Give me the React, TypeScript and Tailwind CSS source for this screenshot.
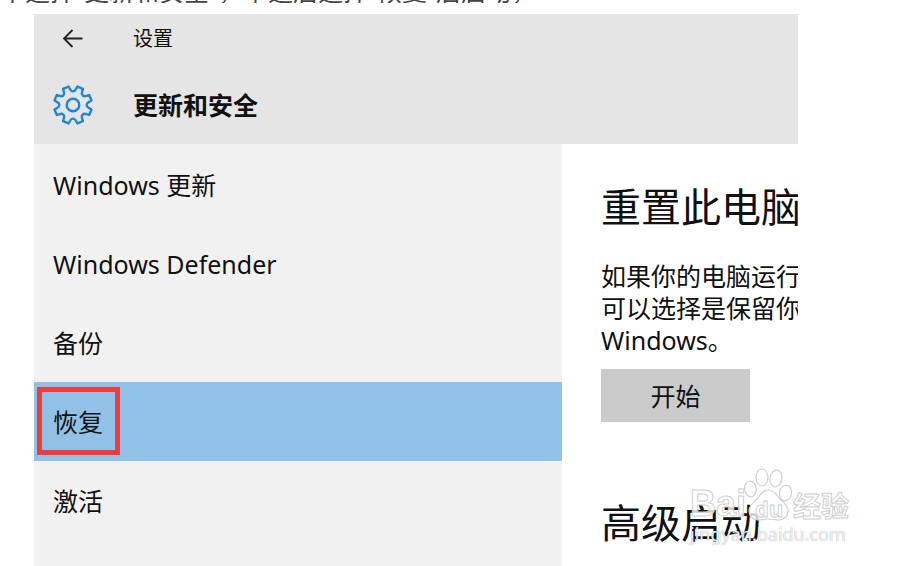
import { useState } from "react";

const navItems = ["Windows 更新", "Windows Defender", "备份", "恢复", "激活"];

function polar(radius: number, degrees: number) {
  const a = (degrees * Math.PI) / 180;
  return `${(radius * Math.cos(a)).toFixed(2)} ${(radius * Math.sin(a)).toFixed(2)}`;
}

// Eight teeth with a deep rounded notch between each pair
function gearPath() {
  let d = "";
  for (let i = 0; i < 8; i++) {
    const a = 22.5 + i * 45;
    d += `${i === 0 ? "M" : "L"}${polar(19, a - 9)} L${polar(19, a + 9)} `;
    d += `L${polar(16, a + 12)} C${polar(13, a + 16)} ${polar(13, a + 29)} ${polar(16, a + 33)} `;
  }
  return d + "Z";
}

function GearIcon() {
  return (
    <svg viewBox="-20 -20 40 40" className="h-10 w-10" fill="none" stroke="#2384d3" strokeWidth="2.4" strokeLinejoin="round" aria-hidden="true">
      <path d={gearPath()} />
      <circle r="6.3" />
    </svg>
  );
}

function BackIcon() {
  return (
    <svg viewBox="0 0 20 20" className="h-5 w-5" fill="none" stroke="#222" strokeWidth="1.8" aria-hidden="true">
      <path d="M19.5 9.500H1M9.500 1L1 9.500l8.500 8.500" />
    </svg>
  );
}

function Paw() {
  return (
    <svg viewBox="0 0 50 54" className="h-[54px] w-[50px]" fill="#fff" fillOpacity="0.8" stroke="#cfcfcf" strokeWidth="1.2" aria-hidden="true">
      <ellipse cx="7.500" cy="21" rx="5.800" ry="7.800" transform="rotate(-8 7.500 21)" />
      <ellipse cx="19" cy="9.500" rx="6" ry="8.500" />
      <ellipse cx="33" cy="10.500" rx="6" ry="8.500" transform="rotate(10 33 10.500)" />
      <ellipse cx="42.500" cy="25" rx="6" ry="7.800" transform="rotate(10 42.500 25)" />
      <path d="M25 22c-5 0-7 4-10 8-4 4-9 7-9 13 0 5 4 9 9 9 4 0 6-1 10-1s7 1 11 1c5 0 9-4 9-9 0-6-5-9-9-13-3-4-6-8-11-8Z" />
    </svg>
  );
}

function Watermark() {
  return (
    <div className="pointer-events-none absolute top-[468px] left-[690px] w-[162px] font-['Noto_Sans','Noto_Sans_CJK_SC',sans-serif] text-white/80">
      <div className="flex h-[54px] items-end font-bold [-webkit-text-stroke:1px_#cfcfcf]">
        <span className="w-[53px] font-['Liberation_Sans',sans-serif] text-[36px] leading-[36px]">Bai</span>
        <span className="relative">
          <Paw />
          <span className="absolute bottom-0 left-[12px] text-[22px] leading-[28px]">du</span>
        </span>
        <span className="text-[28px] leading-[32px]">经验</span>
      </div>
      <div className="text-[18px] leading-[24px] [text-shadow:0_0_1px_#999]">jingyan.baidu.com</div>
    </div>
  );
}

export default function App() {
  const [active, setActive] = useState("恢复");

  return (
    <div className="relative flex h-screen flex-col overflow-hidden bg-white font-['Noto_Sans','Noto_Sans_CJK_SC',sans-serif] text-[25px] text-[#111]">
      {/* Tail of the paragraph above the window */}
      <p className="flex h-[14px] shrink-0 flex-col">
        <span className="flex h-[3px] items-end overflow-hidden leading-[24px] whitespace-nowrap text-[#444]">
          单选择“更新和安全”，单选后选择“恢复”后启动，
        </span>
      </p>

      <div className="mr-[101px] ml-[34px] flex min-h-0 flex-1 flex-col overflow-hidden">
        <header className="h-[130px] shrink-0 bg-[#e5e5e5] pl-[19px]">
          <div className="flex h-[50px] items-center">
            <button type="button" aria-label="返回" className="flex w-20 pl-[10px]">
              <BackIcon />
            </button>
            <span className="text-[20px] leading-[30px]">设置</span>
          </div>
          <div className="flex h-[82px] items-center">
            <span className="w-20">
              <GearIcon />
            </span>
            <h1 className="leading-[32px] font-bold">更新和安全</h1>
          </div>
        </header>

        <div className="flex min-h-0 flex-1">
          <nav className="w-[528px] shrink-0 bg-[#f1f1f1] pt-px">
            {navItems.map((item) => (
              <button
                key={item}
                type="button"
                onClick={() => setActive(item)}
                className={`relative block h-[79px] w-full pl-[19px] text-left leading-[32px] ${
                  item === active ? "bg-[#91c1e7]" : ""
                }`}
              >
                {item}
                {item === "恢复" && (
                  <span className="absolute top-[5px] left-[3px] h-[68px] w-[83px] border-[5px] border-[#f03a3c]" />
                )}
              </button>
            ))}
          </nav>

          <main className="min-w-0 flex-1 overflow-hidden pt-9 pl-[39px] whitespace-nowrap">
            <h2 className="text-[40px] leading-[54px]">重置此电脑</h2>
            <p className="mt-[26px] leading-[32px]">
              如果你的电脑运行
              <br />
              可以选择是保留你
              <br />
              Windows。
            </p>
            <button type="button" className="mt-[13px] block h-[53px] w-[149px] bg-[#cbcbcb] leading-[32px]">
              开始
            </button>
            <h2 className="mt-[74px] text-[40px] leading-[54px]">高级启动</h2>
          </main>
        </div>
      </div>

      <Watermark />
    </div>
  );
}
